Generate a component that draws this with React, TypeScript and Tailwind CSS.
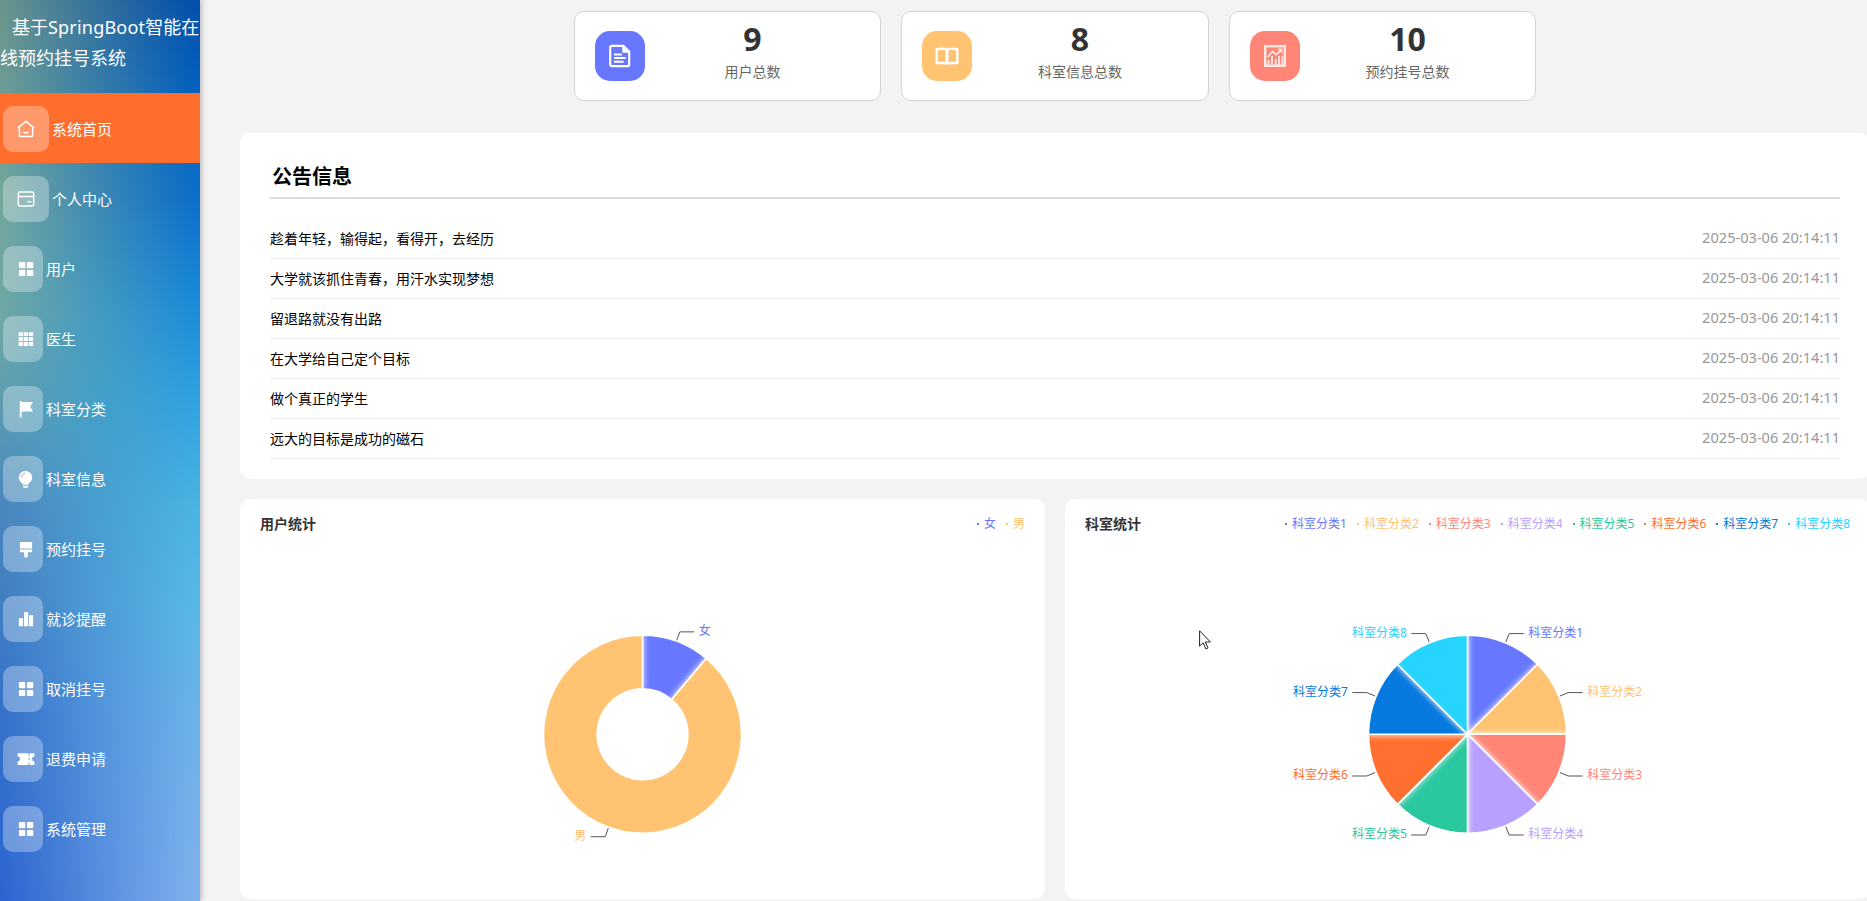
import type { ReactNode } from 'react';
import { clsx } from 'clsx';

type Slice = { name: string; value: number; color: string };

const menuItems = [
  { name: '系统首页', icon: 'home', wide: true },
  { name: '个人中心', icon: 'card', wide: true },
  { name: '用户', icon: 'menu' },
  { name: '医生', icon: 'grid' },
  { name: '科室分类', icon: 'flag' },
  { name: '科室信息', icon: 'bulb' },
  { name: '预约挂号', icon: 'brush' },
  { name: '就诊提醒', icon: 'bars' },
  { name: '取消挂号', icon: 'menu' },
  { name: '退费申请', icon: 'ticket' },
  { name: '系统管理', icon: 'menu' },
];

const notices = [
  '趁着年轻，输得起，看得开，去经历',
  '大学就该抓住青春，用汗水实现梦想',
  '留退路就没有出路',
  '在大学给自己定个目标',
  '做个真正的学生',
  '远大的目标是成功的磁石',
];

const users: Slice[] = [
  { name: '女', value: 1, color: '#6777ff' },
  { name: '男', value: 8, color: '#ffc371' },
];

const departments: Slice[] = [
  { name: '科室分类1', value: 1, color: '#6777ff' },
  { name: '科室分类2', value: 1, color: '#ffc371' },
  { name: '科室分类3', value: 1, color: '#ff8577' },
  { name: '科室分类4', value: 1, color: '#b8a0ff' },
  { name: '科室分类5', value: 1, color: '#2ac8a0' },
  { name: '科室分类6', value: 1, color: '#ff6f2f' },
  { name: '科室分类7', value: 1, color: '#0579dd' },
  { name: '科室分类8', value: 1, color: '#26d4ff' },
];

const menuIcons: Record<string, ReactNode> = {
  home: (
    <g fill="none" stroke="currentColor" strokeWidth="1.5" strokeLinecap="round" strokeLinejoin="round">
      <path d="M1.2 7.6 9 1.3l7.8 6.3M2.4 6.8v8.6a1 1 0 0 0 1 1h11.2a1 1 0 0 0 1-1V6.8" />
      <path d="M6.8 12.2q2.2 1.5 4.4 0" />
    </g>
  ),
  card: (
    <g fill="none" stroke="currentColor" strokeWidth="1.5">
      <rect x="1.3" y="2" width="15.4" height="14" rx="1.4" />
      <path d="M1.3 6.4h15.4M10.4 11.8h4" />
    </g>
  ),
  menu: (
    <g fill="currentColor">
      <rect x="1.9" y="2.1" width="6.4" height="6.2" rx="0.8" />
      <rect x="9.9" y="2.1" width="6.4" height="6.2" rx="0.8" />
      <rect x="1.9" y="9.9" width="6.4" height="6.2" rx="0.8" />
      <rect x="9.9" y="9.9" width="6.4" height="6.2" rx="0.8" />
    </g>
  ),
  grid: (
    <path
      fill="currentColor"
      d="M1.6 2.2h4.3v3.9H1.6zM6.7 2.2H11v3.9H6.7zM11.8 2.2h4.4v3.9h-4.4zM1.6 7h4.3v4.1H1.6zM6.7 7H11v4.1H6.7zM11.8 7h4.4v4.1h-4.4zM1.6 12h4.3v4.1H1.6zM6.7 12H11v4.1H6.7zM11.8 12h4.4v4.1h-4.4z"
    />
  ),
  flag: <path fill="currentColor" d="M2.8 1h1.8v1h11.3l-2.7 4.7 2.7 4.9H4.6v5.8H2.8z" />,
  bulb: (
    <>
      <path
        fill="currentColor"
        d="M8.5.9a6.6 6.6 0 0 0-3.9 11.9c.7.6 1 1 1 2h5.8c0-1 .3-1.4 1-2A6.6 6.6 0 0 0 8.5.9zM5.9 15.7h5.2v.8a1.3 1.3 0 0 1-1.3 1.3H7.2a1.3 1.3 0 0 1-1.3-1.3z"
      />
      <path d="M4.3 7.1a4.2 4.2 0 0 1 3.7-4" fill="none" stroke="#8fb8d3" strokeWidth="1" strokeLinecap="round" />
    </>
  ),
  brush: (
    <path
      fill="currentColor"
      d="M2.9 1.9h12.2v6.7H2.9zM2.9 9.6h12.2v1.6q0 1-1 1h-3.3v3.7a1.8 1.8 0 0 1-3.6 0v-3.7H3.9q-1 0-1-1z"
    />
  ),
  bars: <path fill="currentColor" d="M1.9 8.3h4.2v7.9H1.9zM7 2h4.1v14.2H7zM11.9 5.3h4.2v10.9h-4.2z" />,
  ticket: (
    <path
      fill="currentColor"
      fillRule="evenodd"
      d="M.6 3.3h16.8v3.3a2.4 2.4 0 0 0 0 4.8v3.7H.6v-3.7a2.4 2.4 0 0 0 0-4.8zM11.6 3.3v2.3h1V3.3zM11.6 7.8v2.7h1V7.8zM11.6 12.7v2.4h1v-2.4z"
    />
  ),
};

function MenuIcon({ name }: { name: string }) {
  return (
    <svg viewBox="0 0 18 18" className="h-[18px] w-[18px] shrink-0">
      {menuIcons[name]}
    </svg>
  );
}

function Sidebar() {
  return (
    <aside className="relative z-10 h-[901px] w-[200px] shrink-0 bg-[linear-gradient(180deg,#0450ab_0%,#0560bd_9%,#0d6fca_22%,#1b8ad9_33%,#2fa1df_44%,#48b3e2_56%,#58b7e7_67%,#69b2e9_78%,#80afed_100%)] shadow-[1px_0_6px_rgba(0,0,0,0.3)]">
      {/* left hand tint that fades towards the right edge */}
      <div className="absolute inset-0 bg-[linear-gradient(180deg,#6a958c_0%,#74a79c_22%,#6fa7a5_35%,#5c9cae_45%,#4a86bd_56%,#417dc2_67%,#3572c9_78%,#2a64cf_100%)] [mask-image:linear-gradient(90deg,#000_0%,rgba(0,0,0,0.46)_50%,transparent_96%)]" />
      <div className="relative text-white">
        <div className="h-[93px] pt-3 indent-[12px] text-[18px] leading-[31px] whitespace-nowrap">
          基于<span className="tracking-[0.2px]">SpringBoot</span>智能在
          <div className="indent-0">线预约挂号系统</div>
        </div>
        <ul>
          {menuItems.map((item, i) => (
            <li key={item.name} className={clsx('flex h-[70px] items-center gap-[3px] pt-[2px] pl-[3px]', i === 0 && 'bg-[#ff6e2d]')}>
              <span
                className={clsx(
                  'flex h-[46px] items-center rounded-[10px] bg-white/30 pl-[14px]',
                  item.wide ? 'w-[46px]' : 'w-[40px]'
                )}
              >
                <MenuIcon name={item.icon} />
              </span>
              <span className="text-[15px] leading-5">{item.name}</span>
            </li>
          ))}
        </ul>
      </div>
    </aside>
  );
}

function StatCard({ value, label, color, children }: { value: number; label: string; color: string; children: ReactNode }) {
  return (
    <div className="flex h-[90px] w-[307.5px] items-center rounded-[10px] border border-[#d4d4d4] bg-white px-5">
      <div className={clsx('flex h-[50px] w-[50px] items-center justify-center rounded-[15px] text-white', color)}>{children}</div>
      <div className="flex-1 text-center">
        <div className="text-[32px] leading-[38px] font-bold text-[#333]">{value}</div>
        <div className="pb-[6px] text-[14px] leading-7 text-[#666]">{label}</div>
      </div>
    </div>
  );
}

function Stats() {
  return (
    <div className="flex justify-center gap-5">
      <StatCard value={9} label="用户总数" color="bg-[#6777ff]">
        <svg viewBox="0 0 24 24" className="h-6 w-6" fill="none" stroke="currentColor">
          <path d="M3.5 1.9h11.8l5.9 5.9v12.7a1.6 1.6 0 0 1-1.6 1.6H3.5a1.3 1.3 0 0 1-1.3-1.3V3.2a1.3 1.3 0 0 1 1.3-1.3z" strokeWidth="2.2" />
          <path d="M14.8 2v6.2h6z" fill="currentColor" strokeWidth="1" />
          <path d="M6 10.5h8M6 14h11.8M6 17.7h9.6" strokeWidth="2" />
        </svg>
      </StatCard>
      <StatCard value={8} label="科室信息总数" color="bg-[#ffc371]">
        <svg viewBox="0 0 24 24" className="h-6 w-6" fill="none" stroke="currentColor" strokeWidth="2.4" strokeLinejoin="round">
          <path d="M12 5.7Q9.5 4.4 6.5 4.7L1.7 5.2V19h6.1q2.5 0 4.2.5 1.7-.5 4.2-.5h6.1V5.2l-4.8-.5Q14.5 4.4 12 5.7z" />
          <path d="M12 5.7V19" strokeWidth="3" />
        </svg>
      </StatCard>
      <StatCard value={10} label="预约挂号总数" color="bg-[#ff8577]">
        <svg viewBox="0 0 24 24" className="h-6 w-6" fill="none" stroke="#ffe9e5">
          <rect x="2.2" y="2.2" width="19.6" height="19.6" strokeWidth="2.4" />
          <path d="M4.5 13 9.5 7.5l3.8 3L18 6" strokeWidth="1.8" />
          <path d="M14.5 4.5h5v5z" fill="#ffe9e5" stroke="none" />
          <path d="M5.5 21v-5M9 21v-9M12.7 21v-6M16 21v-9M19.3 21v-8.5" strokeWidth="1.8" />
        </svg>
      </StatCard>
    </div>
  );
}

function Notices() {
  return (
    <section className="mt-8 h-[346px] rounded-[10px] bg-white px-[30px] pt-[26px]">
      <h2 className="h-10 border-b-2 border-[#dcdcdc] pl-[2px] text-[20px] leading-[36px] font-bold text-black">公告信息</h2>
      <ul className="mt-5">
        {notices.map((text) => (
          <li key={text} className="flex h-10 items-center justify-between border-b border-[#eee] pb-px">
            <span className="text-[14px] text-black">{text}</span>
            <span className="text-[14.6px] text-[#999]">2025-03-06 20:14:11</span>
          </li>
        ))}
      </ul>
    </section>
  );
}

// angle is measured clockwise from twelve o'clock
function point(angle: number, r: number) {
  return [382.5 + r * Math.sin(angle), 215.3 - r * Math.cos(angle)];
}

function Pie({ data, inner }: { data: Slice[]; inner: number }) {
  const total = data.reduce((sum, d) => sum + d.value, 0);
  const outer = 99;
  let sum = 0;
  const slices = data.map((d) => {
    const start = (sum / total) * Math.PI * 2;
    sum += d.value;
    const end = (sum / total) * Math.PI * 2;
    const mid = (start + end) / 2;
    const large = end - start > Math.PI ? 1 : 0;
    const path = `M${point(start, inner)}L${point(start, outer)}A${outer} ${outer} 0 ${large} 1 ${point(end, outer)}L${point(end, inner)}A${inner} ${inner} 0 ${large} 0 ${point(start, inner)}Z`;
    return { ...d, path, mid };
  });

  return (
    <svg viewBox="0 0 765 360" className="block h-[360px] w-[765px]">
      {slices.map((s) => (
        <path key={s.name} d={s.path} fill={s.color} stroke="#fff" strokeWidth="1.6" className="drop-shadow-[0_0_3px_#fff]" />
      ))}
      {slices.map((s) => {
        const side = Math.sin(s.mid) > 0 ? 1 : -1;
        const from = point(s.mid, 100);
        const bend = point(s.mid, 109);
        return (
          <g key={s.name}>
            <path d={`M${from}L${bend}h${side * 14.5}`} fill="none" stroke="#555" strokeWidth="1" />
            <text x={bend[0] + side * 19} y={bend[1] + 3} fill={s.color} textAnchor={side > 0 ? 'start' : 'end'} className="text-[12px]">
              {s.name}
            </text>
          </g>
        );
      })}
    </svg>
  );
}

function ChartPanel({ title, data, inner }: { title: string; data: Slice[]; inner: number }) {
  return (
    <section className="h-[400px] w-[805px] shrink-0 rounded-[10px] bg-white px-5">
      <div className="-mb-[30px] flex h-[50px] items-center justify-between">
        <h3 className="pb-[2px] text-[14px] font-bold text-[#333]">{title}</h3>
        <div className="flex gap-[10px]">
          {data.map((d) => (
            <span key={d.name} className="flex items-center gap-[5px] text-[12px]" style={{ color: d.color }}>
              <i className="h-[2px] w-[2px] bg-current" />
              {d.name}
            </span>
          ))}
        </div>
      </div>
      <Pie data={data} inner={inner} />
    </section>
  );
}

function Cursor() {
  return (
    <svg viewBox="0 0 13 20" className="absolute top-[630px] left-[1199px] h-5 w-[13px]">
      <path d="M.6.8v15.4l3.5-3.4 2.7 6.1 2.2-1-2.7-5.9h5.1z" fill="#fff" stroke="#222" strokeWidth="1" />
    </svg>
  );
}

export default function App() {
  return (
    <div className="relative flex h-[901px] w-full overflow-hidden bg-[#f3f3f3] font-['Noto_Sans','Noto_Sans_CJK_SC',sans-serif]">
      <Sidebar />
      <main className="ml-10 w-[1630px] shrink-0 pt-[11px]">
        <Stats />
        <Notices />
        <div className="mt-5 flex gap-5">
          <ChartPanel title="用户统计" data={users} inner={45.4} />
          <ChartPanel title="科室统计" data={departments} inner={0} />
        </div>
      </main>
      <Cursor />
    </div>
  );
}
